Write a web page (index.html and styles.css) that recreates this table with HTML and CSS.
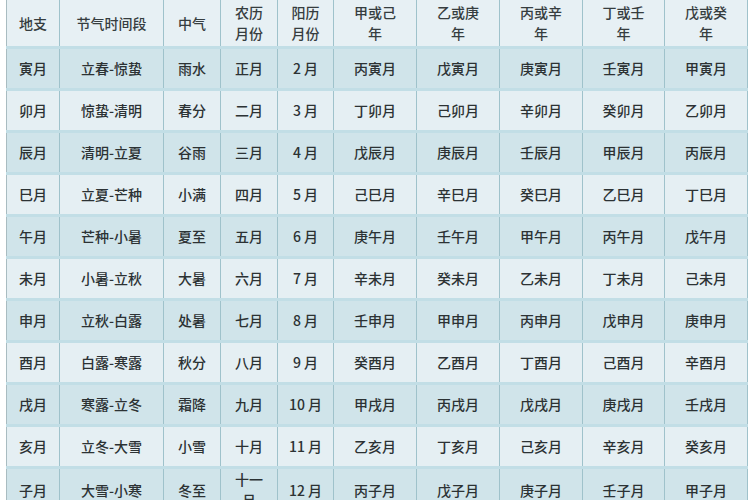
FILE: index.html
```html
<!DOCTYPE html>
<html lang="zh-CN">
<head>
<meta charset="utf-8">
<title>月份干支表</title>
<link rel="stylesheet" href="styles.css">
</head>
<body>
<table class="tbl">
  <colgroup>
    <col class="c1"><col class="c2"><col class="c3"><col class="c4"><col class="c5">
    <col class="c6"><col class="c6"><col class="c6"><col class="c9"><col class="c6">
  </colgroup>
  <thead>
    <tr class="head">
      <th>地支</th><th>节气时间段</th><th>中气</th><th>农历<br>月份</th><th>阳历<br>月份</th>
      <th>甲或己<br>年</th><th>乙或庚<br>年</th><th>丙或辛<br>年</th><th>丁或壬<br>年</th><th>戊或癸<br>年</th>
    </tr>
  </thead>
  <tbody>
    <tr class="dark"><td>寅月</td><td>立春-惊蛰</td><td>雨水</td><td>正月</td><td>2 月</td><td>丙寅月</td><td>戊寅月</td><td>庚寅月</td><td>壬寅月</td><td>甲寅月</td></tr>
    <tr class="light"><td>卯月</td><td>惊蛰-清明</td><td>春分</td><td>二月</td><td>3 月</td><td>丁卯月</td><td>己卯月</td><td>辛卯月</td><td>癸卯月</td><td>乙卯月</td></tr>
    <tr class="dark"><td>辰月</td><td>清明-立夏</td><td>谷雨</td><td>三月</td><td>4 月</td><td>戊辰月</td><td>庚辰月</td><td>壬辰月</td><td>甲辰月</td><td>丙辰月</td></tr>
    <tr class="light"><td>巳月</td><td>立夏-芒种</td><td>小满</td><td>四月</td><td>5 月</td><td>己巳月</td><td>辛巳月</td><td>癸巳月</td><td>乙巳月</td><td>丁巳月</td></tr>
    <tr class="dark"><td>午月</td><td>芒种-小暑</td><td>夏至</td><td>五月</td><td>6 月</td><td>庚午月</td><td>壬午月</td><td>甲午月</td><td>丙午月</td><td>戊午月</td></tr>
    <tr class="light"><td>未月</td><td>小暑-立秋</td><td>大暑</td><td>六月</td><td>7 月</td><td>辛未月</td><td>癸未月</td><td>乙未月</td><td>丁未月</td><td>己未月</td></tr>
    <tr class="dark"><td>申月</td><td>立秋-白露</td><td>处暑</td><td>七月</td><td>8 月</td><td>壬申月</td><td>甲申月</td><td>丙申月</td><td>戊申月</td><td>庚申月</td></tr>
    <tr class="light"><td>酉月</td><td>白露-寒露</td><td>秋分</td><td>八月</td><td>9 月</td><td>癸酉月</td><td>乙酉月</td><td>丁酉月</td><td>己酉月</td><td>辛酉月</td></tr>
    <tr class="dark"><td>戌月</td><td>寒露-立冬</td><td>霜降</td><td>九月</td><td>10 月</td><td>甲戌月</td><td>丙戌月</td><td>戊戌月</td><td>庚戌月</td><td>壬戌月</td></tr>
    <tr class="light"><td>亥月</td><td>立冬-大雪</td><td>小雪</td><td>十月</td><td>11 月</td><td>乙亥月</td><td>丁亥月</td><td>己亥月</td><td>辛亥月</td><td>癸亥月</td></tr>
    <tr class="dark"><td>子月</td><td>大雪-小寒</td><td>冬至</td><td>十一<br>月</td><td>12 月</td><td>丙子月</td><td>戊子月</td><td>庚子月</td><td>壬子月</td><td>甲子月</td></tr>
  </tbody>
</table>
</body>
</html>
```
FILE: styles.css
```css
html, body {
  margin: 0;
  padding: 0;
  background: #ffffff;
  overflow: hidden;
}
body {
  padding-left: 6px;
}
.tbl {
  border-collapse: collapse;
  table-layout: fixed;
  width: 741px;
  font-family: "Noto Sans CJK SC", "Noto Sans", sans-serif;
  font-size: 14px;
  color: #2c3234;
}
.c1 { width: 53px; }
.c2 { width: 104px; }
.c3 { width: 57px; }
.c4 { width: 57px; }
.c5 { width: 56px; }
.c6 { width: 83px; }
.c9 { width: 82px; }
.tbl th, .tbl td {
  text-align: center;
  vertical-align: middle;
  padding: 0;
  border-left: 1px solid #9fc2cb;
  border-right: 1px solid #9fc2cb;
  border-bottom: 3px solid #c2dee6;
  line-height: 21px;
  font-weight: 500;
  white-space: nowrap;
}
.tbl th:first-child, .tbl td:first-child {
  border-left: 1px solid #a9bcc1;
}
.head th {
  height: 46px;
  background: #e7f0f4;
  color: #363d3f;
}
.tbl tbody td {
  height: 39px;
}
.dark td { background: #d0e4ea; }
.light td { background: #e5eff3; }
```
